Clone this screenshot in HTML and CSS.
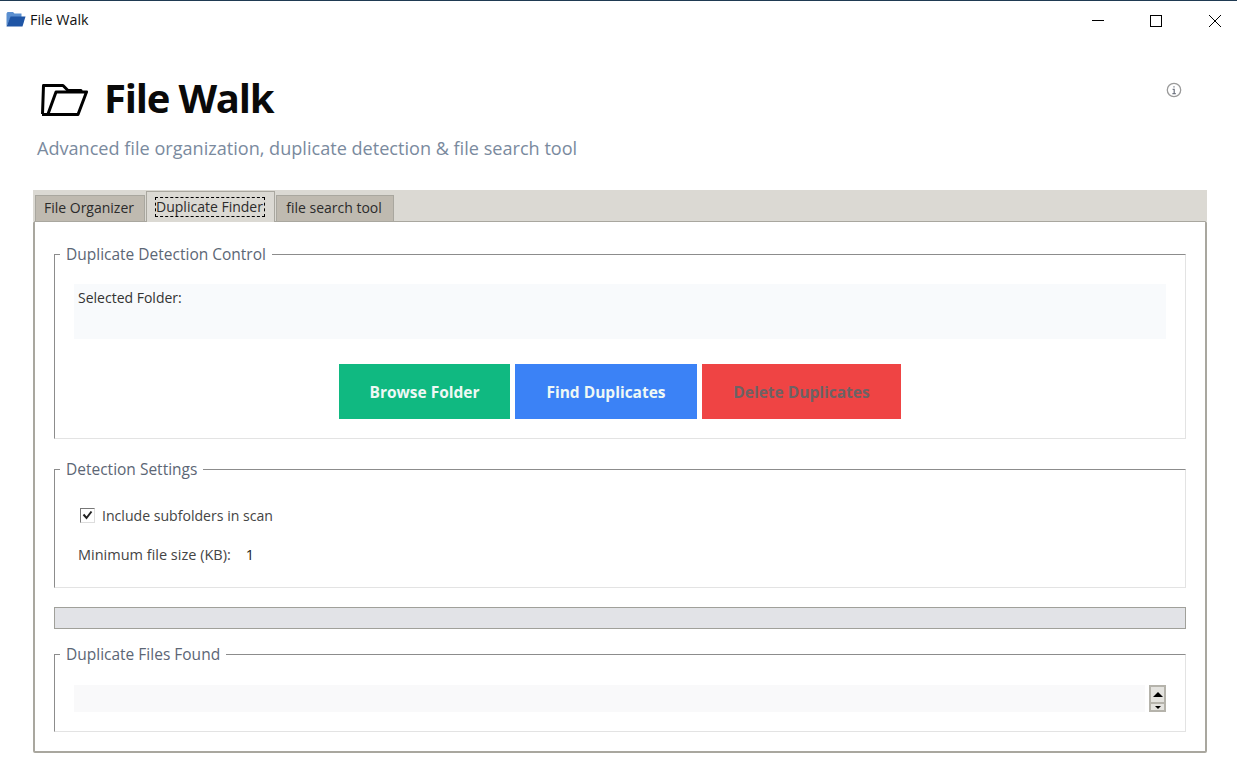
FILE: index.html
```html
<!DOCTYPE html>
<html lang="en">
<head>
    <meta charset="UTF-8">
    <meta name="viewport" content="width=device-width, initial-scale=1.0">
    <title>File Walk</title>
    <link rel="stylesheet" href="styles.css">
</head>
<body>
    <!-- Barra de titulo -->
    <div class="titlebar">
        <div class="title-left">
            <svg class="app-icon" width="20" height="15" viewBox="0 0 20 15">
                <path d="M0.500 14V1.500L1.500 0h5.500l1.500 1.500h7V5H5z" fill="#5b8fd0"/>
                <path d="M4.500 4.500H19.500L16.500 14.500H0.500z" fill="#1f55a5"/>
            </svg>
            <span>File Walk</span>
        </div>
        <div class="window-controls">
            <svg width="12" height="12" viewBox="0 0 12 12"><path d="M0 5.500H12" stroke="#000" fill="none"/></svg>
            <svg width="12" height="12" viewBox="0 0 12 12"><rect x="0.500" y="0.500" width="11" height="11" stroke="#000" fill="none"/></svg>
            <svg width="12" height="12" viewBox="0 0 12 12"><path d="M0 0L12 12M12 0L0 12" stroke="#000" fill="none"/></svg>
        </div>
    </div>

    <div class="header">
        <div>
            <h1>
                <svg class="logo" width="48" height="38" viewBox="0 0 48 38">
                    <path d="M2.500 36L3.500 7.500H23L28 12.500H41V14" fill="none" stroke="#000" stroke-width="3" stroke-linejoin="round"/>
                    <path d="M2 36.500H38L46.500 14H16L8 36" fill="none" stroke="#000" stroke-width="3" stroke-linejoin="round"/>
                </svg>
                File Walk
            </h1>
            <p class="subtitle">Advanced file organization, duplicate detection &amp; file search tool</p>
        </div>
        <svg class="info" width="16" height="16" viewBox="0 0 16 16">
            <circle cx="8" cy="8" r="6.700" fill="none" stroke="#9a9a9a" stroke-width="1.300"/>
            <path d="M8 4.200V5.600M6.600 7.300H8.200V11.500M6.400 11.700H9.800" fill="none" stroke="#6f7480" stroke-width="1.200"/>
        </svg>
    </div>

    <div class="notebook">
        <div class="tabs">
            <div class="tab">File Organizer</div>
            <div class="tab active"><span class="focus">Duplicate Finder</span></div>
            <div class="tab">file search tool</div>
        </div>

        <div class="panel">
            <fieldset class="group control">
                <legend>Duplicate Detection Control</legend>
                <div class="folder-box">Selected Folder:</div>
                <div class="buttons">
                    <button class="btn green">Browse Folder</button>
                    <button class="btn blue">Find Duplicates</button>
                    <button class="btn red">Delete Duplicates</button>
                </div>
            </fieldset>

            <fieldset class="group settings">
                <legend>Detection Settings</legend>
                <label class="check-row">
                    <span class="checkbox">
                        <svg width="11" height="11" viewBox="0 0 11 11"><path d="M1.500 4.500L4.500 8L9.500 1.500" fill="none" stroke="#222" stroke-width="2"/></svg>
                    </span>
                    Include subfolders in scan
                </label>
                <div class="size-row"><span>Minimum file size (KB):</span><span class="size-value">1</span></div>
            </fieldset>

            <div class="progress"></div>

            <fieldset class="group results">
                <legend>Duplicate Files Found</legend>
                <div class="list-row">
                    <div class="listbox"></div>
                    <div class="scrollbar">
                        <div class="scroll-up"><svg width="10" height="5" viewBox="0 0 10 5"><path d="M0 5L5 0L10 5z" fill="#000"/></svg></div>
                        <div class="scroll-down"><svg width="6" height="3" viewBox="0 0 6 3"><path d="M0 0H6L3 3z" fill="#000"/></svg></div>
                    </div>
                </div>
            </fieldset>
        </div>
    </div>
</body>
</html>
```

FILE: styles.css
```css
/* Geral */
html, body {
    height: 100%;
}

body {
    margin: 0;
    background: white;
    font-family: "Open Sans", "Noto Sans", sans-serif;
    color: #333;
    overflow: hidden;
}

/* Barra de titulo */
.titlebar {
    display: flex;
    justify-content: space-between;
    align-items: center;
    border-top: 1px solid #1f3a52;
    box-sizing: border-box;
    height: 38px;
    padding: 0 16px 0 6px;
}

.title-left {
    display: flex;
    align-items: center;
    gap: 4px;
    font-size: 14.300px;
    color: #111;
}

.window-controls {
    display: flex;
    gap: 46px;
    margin-top: 2px;
}

.window-controls svg {
    display: block;
}

.window-controls svg:last-child {
    margin-left: 1px;
}

/* Cabecalho */
.header {
    display: flex;
    justify-content: space-between;
    align-items: flex-start;
    height: 152px;
    padding: 0 55px 0 37px;
}

h1 {
    display: flex;
    align-items: center;
    gap: 16px;
    margin: 37px 0 0 3px;
    height: 44px;
    font-size: 40px;
    font-weight: 700;
    color: #0a0a0a;
    letter-spacing: -1.200px;
}

.subtitle {
    margin: 17px 0 0 0;
    font-size: 18.100px;
    color: #7a8a9e;
}

.info {
    margin-top: 44px;
}

/* Abas */
.notebook {
    margin: 0 30px 0 33px;
}

.tabs {
    display: flex;
    align-items: flex-end;
    height: 31px;
    padding-left: 2px;
    gap: 1px;
    background: #dbd9d3;
}

.tab {
    display: flex;
    align-items: center;
    justify-content: center;
    box-sizing: border-box;
    height: 26px;
    width: 110px;
    padding: 0 2px 3px 0;
    font-size: 14px;
    color: #2b2b2b;
    background: #bfbab0;
    border: 1px solid #a9a79f;
    border-bottom: none;
}

.tab:nth-child(3) {
    width: 118px;
}

.tab.active {
    height: 31px;
    width: 129px;
    padding-bottom: 0;
    background: #dbd9d3;
    margin-bottom: -1px;
}

.focus {
    box-sizing: border-box;
    height: 20px;
    line-height: 18px;
    width: 110px;
    text-align: center;
    white-space: nowrap;
    border: 1px dashed #000;
}

.panel {
    box-sizing: border-box;
    height: 532px;
    padding: 24px 19px 0 19px;
    border: 2px solid #a9a79f;
    border-top-width: 1px;
    border-radius: 2px;
}

/* Grupos */
.group {
    box-sizing: border-box;
    margin: 0;
    padding: 0;
    min-width: 0;
    border: 1px solid #e3e3e3;
    border-top-color: #8c8c8c;
    border-left-color: #8c8c8c;
}

.group legend {
    margin-left: 5px;
    padding: 0 6px;
    font-size: 15.500px;
    line-height: 16px;
    color: #5c6675;
}

.control {
    height: 193px;
}

.folder-box {
    box-sizing: border-box;
    height: 55px;
    margin: 22px 19px 0 19px;
    padding: 4px;
    font-size: 14px;
    color: #333;
    background: #f8fafc;
}

.buttons {
    display: flex;
    justify-content: center;
    gap: 5px;
    margin-top: 25px;
}

.btn {
    height: 55px;
    border: none;
    padding: 0;
    font-family: inherit;
    font-size: 15.500px;
    font-weight: 700;
    color: #eef8f5;
}

.green {
    width: 171px;
    background: #10b981;
}

.blue {
    width: 182px;
    background: #3b82f6;
}

.red {
    width: 199px;
    background: #ef4444;
    color: #6d6264;
}

.settings {
    height: 127px;
    margin-top: 22px;
    font-size: 14.500px;
}

.check-row {
    display: flex;
    align-items: center;
    gap: 7px;
    margin: 29px 0 0 25px;
    font-size: 14.100px;
    color: #444;
}

.checkbox {
    display: flex;
    align-items: center;
    justify-content: center;
    box-sizing: border-box;
    width: 15px;
    height: 15px;
    border: 1px solid #777;
    border-right-color: #ddd;
    border-bottom-color: #ddd;
}

.size-row {
    display: flex;
    gap: 15px;
    margin: 20px 0 0 23px;
    color: #444;
}

.size-value {
    color: #222;
}

.progress {
    box-sizing: border-box;
    height: 22px;
    margin-top: 19px;
    background: #e2e3e7;
    border: 1px solid #a0a09a;
}

.results {
    height: 86px;
    margin-top: 17px;
}

.list-row {
    display: flex;
    gap: 4px;
    margin: 23px 19px 0 19px;
}

.listbox {
    flex: 1;
    height: 27px;
    background: #f9f9fa;
}

.scrollbar {
    display: flex;
    flex-direction: column;
    gap: 2px;
    box-sizing: border-box;
    width: 17px;
    height: 27px;
    background: #b5b3ab;
    border: 2px solid #b5b3ab;
}

.scroll-up, .scroll-down {
    display: flex;
    align-items: center;
    justify-content: center;
    background: #e4e3df;
}

.scroll-up {
    height: 15px;
}

.scroll-down {
    height: 6px;
}
```
